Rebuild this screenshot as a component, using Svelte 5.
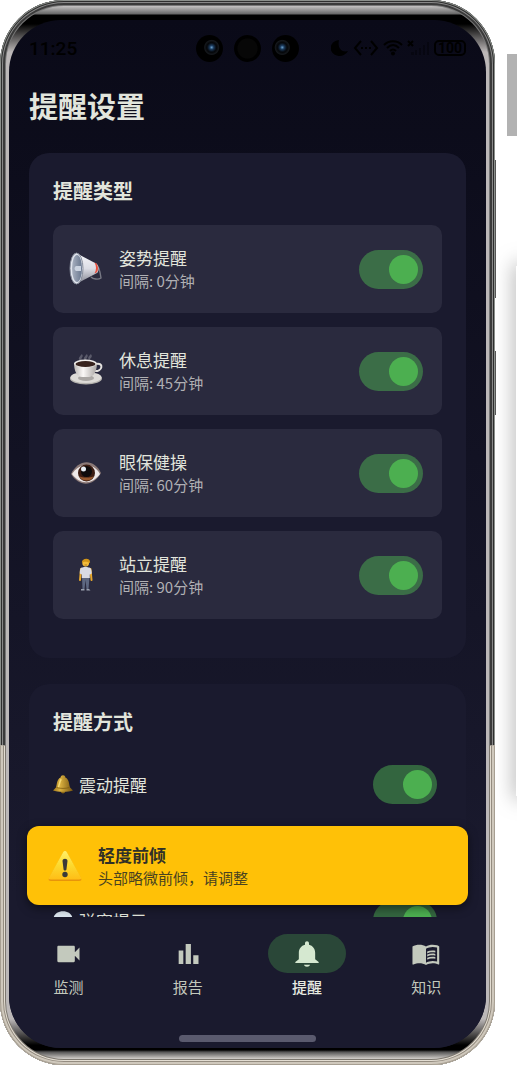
<script>
  // 提醒类型
  let reminders = $state([
    { id: 'posture', icon: 'horn', name: '姿势提醒', interval: 0, enabled: true },
    { id: 'rest', icon: 'coffee', name: '休息提醒', interval: 45, enabled: true },
    { id: 'eye', icon: 'eye', name: '眼保健操', interval: 60, enabled: true },
    { id: 'stand', icon: 'person', name: '站立提醒', interval: 90, enabled: true }
  ]);

  // 提醒方式
  let methods = $state([
    { id: 'vibrate', icon: 'bell', name: '震动提醒', enabled: true },
    { id: 'popup', icon: 'bubble', name: '弹窗提示', enabled: true }
  ]);

  const tabs = [
    { id: 'monitor', name: '监测' },
    { id: 'report', name: '报告' },
    { id: 'remind', name: '提醒' },
    { id: 'knowledge', name: '知识' }
  ];
  let current = $state('remind');
</script>

{#snippet picture(name)}
  <svg class="picture" viewBox="0 0 34 34" aria-hidden="true">
    {#if name === 'horn'}
      <path d="M27 13c3 1 4 5 5 13-3 2-8 1-10-1" fill="none" stroke="#777884" stroke-width="1.400" />
      <path d="M7 1 28 12c2 3 2 7 0 9L7 32z" fill="url(#silver)" />
      <path d="m25.500 10.500 2 1c2 3 2 7 0 9l-2 1c2-4 2-7 0-11z" fill="#e8503f" />
      <ellipse cx="7.500" cy="16.500" rx="6.500" ry="15.500" fill="#dfe3ec" stroke="#858b99" />
      <ellipse cx="8" cy="16.500" rx="5" ry="13.500" fill="url(#steel)" />
      <path d="M7 14h5v5H7c-2-1-2-4 0-5z" fill="#cbd3e0" />
    {:else if name === 'coffee'}
      <path d="M12 6c-3-2 2-3 0-5M17 6c-3-2 2-3 0-5M21 5c-2-2 2-2 0-4" fill="none" stroke="#8a8a96" stroke-width="2.500" opacity=".5" />
      <ellipse cx="17" cy="24.500" rx="16" ry="6" fill="#b3b1ad" />
      <ellipse cx="17" cy="23.500" rx="15.500" ry="5.500" fill="#dddbd7" />
      <ellipse cx="17" cy="24" rx="8" ry="3" fill="#aaa7a4" />
      <path d="M27 10c8-2 7 8-2 7" fill="none" stroke="#e4e2df" stroke-width="2" />
      <path d="M5 9h23c0 9-4 14-8 14h-7c-5 0-8-6-8-14z" fill="url(#china)" />
      <ellipse cx="16.500" cy="9.500" rx="11.500" ry="4" fill="#f0eeeb" />
      <ellipse cx="16.500" cy="10" rx="10" ry="3" fill="#38231d" />
    {:else if name === 'eye'}
      <path d="M2 18C9 3 25 2 32 17 24 31 10 31 2 18z" fill="#8b7977" />
      <path d="M3 18C10 7 24 6 31 18 23 29 11 29 3 18z" fill="#eee9e9" />
      <circle cx="17.500" cy="17" r="8.500" fill="#3b1c12" />
      <path d="M10 20a8.500 8.500 0 0 0 15 0c-3 2-12 2-15 0z" fill="#96582f" />
      <circle cx="17.500" cy="15.500" r="5.500" fill="#0e0b0c" />
      <circle cx="14.500" cy="13" r="2.500" fill="#e6edf4" />
    {:else if name === 'person'}
      <path d="M12 11l-1 11M21.500 11l1 11" stroke="#e8a82c" stroke-width="2" stroke-linecap="round" />
      <path d="M13 19h7.500l-1 12h-2l-1-9-1 9h-2z" fill="#5d6780" />
      <path d="M12 31h3.500v1.500H12zM17.500 31H20l1.500 1.500h-4z" fill="#9aa0ae" />
      <path d="M13.500 9.500c2-1 4-1 6 0 2 0 3 1 3.300 6l-2 1V20h-8v-3.500l-2-1c.2-5 .7-6 2.700-6z" fill="#d9dbe4" />
      <circle cx="16.700" cy="5" r="3.400" fill="#f3bd3b" />
      <path d="M13 5c-1-5 9-6 8 0-3-1-5-2-8 0z" fill="#d39618" />
      <path d="M15.500 7h2.500" stroke="#9c6318" stroke-width=".7" />
    {:else if name === 'bell'}
      <circle cx="17" cy="29" r="4" fill="#8a6717" />
      <path d="M17 2c3 0 4 2 4 4 7 3 6 12 8 17l5 5c-7 3-27 3-34 0l5-5C7 18 6 9 13 6c0-2 1-4 4-4z" fill="url(#brass)" />
      <path d="M14 9c-3 4-3 9-5 14" fill="none" stroke="#f7dc78" stroke-width="2.500" />
      <path d="M6 23c7 2 15 2 22 0" fill="none" stroke="#7b5910" stroke-width="1.300" />
    {:else if name === 'bubble'}
      <path d="M17 2c9 0 16 5 16 13s-7 13-16 13l-8 4 1-5C5 25 1 21 1 15 1 7 8 2 17 2z" fill="#dce6ef" />
    {:else if name === 'warning'}
      <path d="M15 4c1-2 3-2 4 0l14 25c1 2 0 3-2 3H3c-2 0-3-1-2-3z" fill="#e8940a" />
      <path d="M15 3.500c1-2 3-2 4 0l14 25c1 1 0 2-2 2H3c-2 0-3-1-2-2z" fill="url(#amber)" />
      <path d="M14.500 12c0-3 5-3 5 0l-1 8c0 2-3 2-3 0z" fill="#3b3a38" />
      <circle cx="17" cy="25.500" r="2.700" fill="#3b3a38" />
    {/if}
  </svg>
{/snippet}

<svg class="defs" aria-hidden="true">
  <defs>
    <linearGradient id="silver" x2="0" y2="1"><stop stop-color="#f6f6f9" /><stop offset=".5" stop-color="#dcdde5" /><stop offset="1" stop-color="#81838f" /></linearGradient>
    <linearGradient id="steel" x2="1" y2="0"><stop stop-color="#a8b0bf" /><stop offset="1" stop-color="#69778f" /></linearGradient>
    <linearGradient id="china" x2="1" y2="0"><stop stop-color="#bbb7b4" /><stop offset=".4" stop-color="#faf8f6" /><stop offset="1" stop-color="#a9a5a2" /></linearGradient>
    <linearGradient id="brass" x2="1" y2="0"><stop stop-color="#9c7419" /><stop offset=".35" stop-color="#dcb240" /><stop offset="1" stop-color="#75530f" /></linearGradient>
    <linearGradient id="amber" x2="0" y2="1"><stop stop-color="#fff06a" /><stop offset=".5" stop-color="#fcd92e" /><stop offset="1" stop-color="#ffbe16" /></linearGradient>
  </defs>
</svg>

<div class="stage">
  <div class="phone">
    <i class="key volume"></i>
    <i class="key power"></i>
    <div class="rim">
      <div class="screen">
        <div class="status">
          <span class="time">11:25</span>
          <div class="cameras">
            <i class="camera lens"></i>
            <i class="camera"></i>
            <i class="camera lens left"></i>
          </div>
          <div class="signals">
            <svg width="18" height="18" viewBox="0 0 18 18" aria-hidden="true"><path d="M8 1a9 8 0 1 0 9 11C11 14 6 9 8 1z" fill="#000" /></svg>
            <svg width="26" height="18" viewBox="0 0 26 18" aria-hidden="true"><path d="M8 2 2 9l6 7M18 2l6 7-6 7" fill="none" stroke="#000" stroke-width="2" /><path d="M8 8h2v2H8zm4 0h2v2h-2zm4 0h2v2h-2z" /></svg>
            <svg width="20" height="18" viewBox="0 0 20 18" aria-hidden="true"><path d="M1 6c5-5 13-5 18 0M4 9c4-4 8-4 12 0M7 12c2-2 4-2 6 0" fill="none" stroke="#000" stroke-width="2" /><circle cx="10" cy="14.500" r="2" /></svg>
            <svg width="23" height="18" viewBox="0 0 23 18" aria-hidden="true"><path d="m1 2 5 5m0-5L1 7" stroke="#000" stroke-width="2" /><path d="M4 13h3v3H4zm4-2h2v5H8zm4-2h2v7h-2zm4-3h2v10h-2zm4-3h2v13h-2z" opacity=".3" /></svg>
            <span class="battery">100</span>
          </div>
        </div>

        <main>
          <h1>提醒设置</h1>

          <section class="card">
            <h2>提醒类型</h2>
            <ul class="types">
              {#each reminders as item (item.id)}
                <li class="type">
                  {@render picture(item.icon)}
                  <label for={item.id}>
                    <span class="name">{item.name}</span>
                    <span class="interval">间隔: {item.interval}分钟</span>
                  </label>
                  <input class="switch" id={item.id} type="checkbox" bind:checked={item.enabled} />
                </li>
              {/each}
            </ul>
          </section>

          <section class="card">
            <h2>提醒方式</h2>
            <ul class="methods">
              {#each methods as item (item.id)}
                <li class="method">
                  {@render picture(item.icon)}
                  <label for={item.id}>{item.name}</label>
                  <input class="switch" id={item.id} type="checkbox" bind:checked={item.enabled} />
                </li>
              {/each}
            </ul>
          </section>
        </main>

        <div class="bottom">
          <div class="toast" role="alert">
            {@render picture('warning')}
            <div>
              <strong>轻度前倾</strong>
              <p>头部略微前倾，请调整</p>
            </div>
          </div>

          <nav>
            {#each tabs as tab (tab.id)}
              <a href="#{tab.id}" class:active={current === tab.id} onclick={() => (current = tab.id)}>
                <span class="pill">
                  <svg width="28" height="28" viewBox="0 0 24 24" fill="currentColor" aria-hidden="true">
                    {#if tab.id === 'monitor'}
                      <path d="M17 10.500V6c0-.55-.45-1-1-1H3c-.55 0-1 .45-1 1v12c0 .55.45 1 1 1h13c.55 0 1-.45 1-1v-4.500l4 4v-11l-4 4z" />
                    {:else if tab.id === 'report'}
                      <path d="M4 9h4v11.500H4zM10 3.500h4.500v17H10zM16.500 13H21v7.500h-4.500z" />
                    {:else if tab.id === 'remind'}
                      <path d="M12 23c1.300 0 2.400-.7 2.600-1.700H9.400C9.600 22.300 10.700 23 12 23zm7-6.500V11c0-3.500-2-6.200-5.300-7V2.700C13.700 1.800 13 1 12 1s-1.700.8-1.700 1.700V4C7 4.800 5 7.500 5 11v5.500l-3 2.300v1h20v-1l-3-2.300z" />
                    {:else}
                      <path d="M21.500 4.500C20.300 4.150 19 4 17.700 4c-2.100 0-4.200.4-5.700 1.500C10.500 4.400 8.400 4 6.300 4S1.900 4.400.4 5.500v15.150c0 .25.250.5.5.5.1 0 .15-.05.25-.05C2.700 20.400 4.800 20 6.300 20c2 0 4.200.4 5.700 1.500 1.400-.85 3.900-1.500 5.700-1.500 1.700 0 3.500.3 4.900 1.050.1.050.15.050.25.050.250 0 .5-.25.5-.5V5.500c-.6-.45-1.050-.75-1.850-1zm0 14c-1.100-.35-2.500-.5-3.800-.5-1.800 0-4.350.65-5.700 1.500V7.500C13.400 6.650 15.900 6 17.700 6c1.300 0 2.700.15 3.800.5v12z" />
                      <path d="M17.500 10.500c.88 0 1.730.09 2.500.26V9.240c-.79-.15-1.640-.24-2.500-.24-1.700 0-3.240.29-4.500.83v1.660c1.130-.64 2.700-.99 4.500-.99zM13 12.490v1.660c1.130-.64 2.700-.99 4.500-.99.88 0 1.730.09 2.500.26V11.900c-.79-.15-1.640-.24-2.500-.24-1.700 0-3.240.3-4.500.83zM17.500 14.330c-1.700 0-3.240.29-4.500.83v1.660c1.130-.64 2.700-.99 4.500-.99.88 0 1.730.09 2.500.26v-1.520c-.79-.16-1.640-.24-2.500-.24z" />
                    {/if}
                  </svg>
                </span>
                {tab.name}
              </a>
            {/each}
          </nav>
          <div class="gesture"></div>
        </div>
      </div>
    </div>
  </div>

  <div class="beside">
    <div class="block"></div>
    <div class="neighbour"></div>
  </div>
</div>

<style>
  :global(body) {
    background: #fff;
  }

  .stage {
    display: flex;
    height: 100vh;
    overflow: hidden;
    font-family: "Noto Sans CJK SC", sans-serif;
    color: #e2e5dc;
  }

  .defs {
    position: absolute;
    width: 0;
    height: 0;
  }

  /* 手机外框 */
  .phone {
    position: relative;
    flex: 1;
    min-width: 0;
    display: flex;
    padding: 6px;
    border-radius: 64px;
    background: #777;
    box-shadow: inset 0 0 0 1px #8b8f8b, inset 0 0 0 2px #2e2e2e, inset 0 0 0 3px #888, inset 0 0 0 5px #3a3a3a;
  }

  .phone::before {
    content: "";
    position: absolute;
    inset: 0;
    border-radius: 64px;
    background: #7d7870;
    box-shadow: inset 0 0 0 1px #a79f92, inset 0 0 0 3px #cfc8bc, inset 0 0 0 4px #948c80, inset 0 0 0 5px #e3ddd2;
    clip-path: inset(70% 0 0 0);
  }

  .key {
    position: absolute;
    right: -1px;
    width: 1px;
    background: #555;
  }

  .volume {
    top: 15%;
    height: 13%;
  }

  .power {
    top: 33%;
    height: 6%;
  }

  .rim {
    position: relative;
    flex: 1;
    min-width: 0;
    display: flex;
    padding: 14px 3px 11px;
    border-radius: 58px;
    background:
      linear-gradient(#c4c2c2, #666 8px, #000 9px, #000 18px, transparent 46px),
      linear-gradient(to top, #d4d0cc, #555 7px, #000 9px, #000 14px, transparent 40px),
      #bcb8b8;
  }

  .screen {
    position: relative;
    flex: 1;
    min-width: 0;
    display: flex;
    flex-direction: column;
    overflow: hidden;
    border-radius: 52px;
    background: linear-gradient(#0a0a18, #1a1a2e 85%);
  }

  /* 状态栏 */
  .status {
    position: relative;
    flex: none;
    display: flex;
    align-items: center;
    justify-content: space-between;
    height: 56px;
    padding: 0 20px;
    color: #000;
  }

  .time {
    font: 500 19px Roboto, sans-serif;
  }

  .cameras {
    position: absolute;
    inset: 0;
    display: flex;
    align-items: center;
    justify-content: center;
    gap: 11px;
  }

  .camera {
    width: 27px;
    height: 27px;
    border-radius: 50%;
    background: radial-gradient(#070707 50%, #000 55%);
  }

  .lens {
    background: radial-gradient(circle at 58% 46%, #6aa0cc 0, #1b3a5c 2px, #0a121c 4px, #05070a 5px, #15181c 7px, #000 8px);
  }

  .left {
    background: radial-gradient(circle at 38% 46%, #6aa0cc 0, #1b3a5c 2px, #0a121c 4px, #05070a 5px, #15181c 7px, #000 8px);
  }

  .signals {
    display: flex;
    align-items: center;
    gap: 4px;
  }

  .battery {
    padding: 0 2px;
    border: 2px solid #000;
    border-radius: 5px;
    font: 700 14px/12px Roboto, sans-serif;
  }

  /* 内容区 */
  main {
    flex: 1;
    min-height: 0;
    overflow: hidden;
    padding: 0 20px;
  }

  h1 {
    margin: 9px 0 28px;
    font-size: 29px;
    line-height: 40px;
    font-weight: 700;
  }

  .card {
    margin-bottom: 26px;
    padding: 24px;
    border-radius: 20px;
    background: #1a1a2e;
  }

  h2 {
    margin: 0 0 20px;
    font-size: 20px;
    line-height: 28px;
    font-weight: 700;
  }

  ul {
    margin: 0;
    padding: 0;
    list-style: none;
  }

  .types {
    padding-bottom: 15px;
    display: grid;
    gap: 14px;
  }

  .type {
    display: flex;
    align-items: center;
    gap: 16px;
    height: 88px;
    padding: 0 19px 0 16px;
    box-sizing: border-box;
    border-radius: 10px;
    background: #2a2a3e;
  }

  .type label {
    flex: 1;
    display: flex;
    flex-direction: column;
  }

  .picture {
    flex: none;
    width: 34px;
    height: 34px;
  }

  .name {
    font-size: 17px;
    line-height: 24px;
  }

  .interval {
    font-size: 15px;
    line-height: 22px;
    color: #b0b0b4;
  }

  .methods {
    display: grid;
    gap: 68px;
    margin-top: -6px;
  }

  .method {
    display: flex;
    align-items: center;
    gap: 6px;
    height: 68px;
    padding-right: 5px;
    font-size: 17px;
  }

  .method .picture {
    width: 20px;
    height: 20px;
  }

  .method label {
    flex: 1;
  }

  .switch {
    appearance: none;
    flex: none;
    display: flex;
    align-items: center;
    width: 64px;
    height: 39px;
    margin: 0;
    padding: 0 5px;
    border-radius: 20px;
    background: #55556a;
    cursor: pointer;
  }

  .switch::before {
    content: "";
    width: 29px;
    height: 29px;
    border-radius: 50%;
    background: #ccc;
  }

  .switch:checked {
    justify-content: flex-end;
    background: rgba(76, 175, 80, 0.5);
  }

  .switch:checked::before {
    background: #4caf50;
  }

  /* 底部 */
  .bottom {
    position: relative;
    flex: none;
    background: #1a1a2e;
  }

  .toast {
    position: absolute;
    bottom: 100%;
    left: 18px;
    right: 18px;
    display: flex;
    align-items: center;
    gap: 16px;
    height: 79px;
    margin-bottom: 12px;
    padding: 0 21px;
    box-sizing: border-box;
    border-radius: 12px;
    background: #ffc107;
    color: #303027;
    box-shadow: 0 3px 10px rgba(0, 0, 0, 0.5);
  }

  .toast strong {
    display: block;
    font-size: 17px;
    line-height: 24px;
  }

  .toast p {
    margin: 0;
    font-size: 15px;
    line-height: 22px;
    color: #494320;
  }

  nav {
    display: flex;
    padding-top: 17px;
  }

  nav a {
    flex: 1;
    display: flex;
    flex-direction: column;
    align-items: center;
    gap: 4px;
    font-size: 15px;
    line-height: 20px;
    color: #c3c9bd;
    text-decoration: none;
  }

  nav .active {
    color: #e8ebe2;
    font-weight: 500;
  }

  .pill {
    display: flex;
    align-items: center;
    justify-content: center;
    width: 78px;
    height: 39px;
    border-radius: 20px;
  }

  .active .pill {
    background: #2a4738;
    color: #d5e8d0;
  }

  .gesture {
    width: 137px;
    height: 7px;
    margin: 38px auto 6px;
    border-radius: 4px;
    background: #5a5a6e;
  }

  /* 右侧相邻内容 */
  .beside {
    flex: none;
    display: flex;
    flex-direction: column;
    align-items: flex-end;
    width: 22px;
  }

  .block {
    width: 10px;
    height: 82px;
    margin-top: 54px;
    background: #b2b2b2;
  }

  .neighbour {
    width: 1px;
    height: 530px;
    margin-top: 130px;
    box-shadow: 4px 0 20px 3px rgba(0, 0, 0, 0.6);
  }
</style>
